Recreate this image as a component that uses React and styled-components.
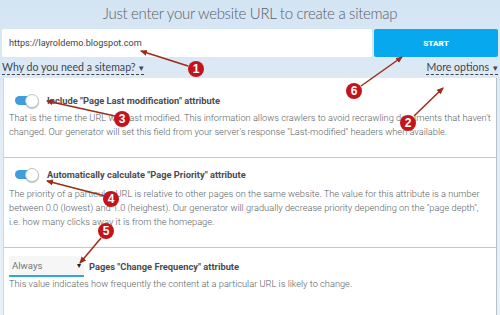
import React from "react";
import styled, { createGlobalStyle } from "styled-components";

const GlobalStyle = createGlobalStyle`
  html, body {
    margin: 0;
    padding: 0;
  }
  body {
    width: 500px;
    height: 315px;
    overflow: hidden;
    font-family: Roboto, "Liberation Sans", sans-serif;
  }
`;

const Page = styled.div`
  position: relative;
  width: 500px;
  height: 315px;
  overflow: hidden;
  display: flex;
  flex-direction: column;
  background: linear-gradient(180deg, #d3e4f3 0%, #dfebf6 30%, #e9f1f8 100%);
`;

const Title = styled.h1`
  margin: 0;
  height: 29px;
  padding-top: 1px;
  box-sizing: border-box;
  text-align: center;
  font-family: Lato, "Open Sans", sans-serif;
  font-weight: 300;
  font-size: 15px;
  letter-spacing: -0.3px;
  line-height: 24px;
  color: #5a5f66;
`;

const FormRow = styled.div`
  display: flex;
  gap: 2px;
  height: 28px;
  padding: 0 2px;
`;

const UrlInput = styled.div`
  flex: 1;
  background: #fff;
  display: flex;
  align-items: center;
  padding-left: 7px;
  font-size: 9.1px;
  color: #444;
  border-radius: 2px;
`;

const StartButton = styled.button`
  width: 124px;
  border: none;
  border-radius: 2px;
  background: #08a8ee;
  color: #fff;
  font-family: Roboto, sans-serif;
  font-weight: 900;
  font-size: 8px;
  letter-spacing: 0.1px;
  padding: 0;
`;

const LinksRow = styled.div`
  display: flex;
  justify-content: space-between;
  align-items: center;
  height: 21px;
  padding: 0 2px;
`;

const DropLink = styled.span`
  font-family: Lato, Roboto, sans-serif;
  font-size: 10.6px;
  color: #3f4650;
  border-bottom: 1px dashed #3f4650;
  line-height: 13px;
  &::after {
    content: "▾";
    font-size: 9px;
    margin-left: 4px;
  }
`;

const Panel = styled.div`
  flex: 1;
  margin: 0 3px;
  background: #fff;
  border-left: 1px solid #cfd6dd;
  border-right: 1px solid #b9c1c8;
`;

const Section = styled.div`
  padding: ${(p) => p.$top}px 6px ${(p) => p.$bottom}px 5px;
  border-bottom: ${(p) => (p.$last ? "none" : "1px solid #c8c8c8")};
`;

const OptionRow = styled.div`
  display: flex;
  align-items: center;
  gap: 9px;
  height: 14px;
  padding-left: 6px;
`;

const Toggle = styled.span`
  position: relative;
  width: 23px;
  height: 9px;
  border-radius: 5px;
  background: #3f9ede;
  flex-shrink: 0;
  &::after {
    content: "";
    position: absolute;
    right: -1px;
    top: -2px;
    width: 12px;
    height: 12px;
    border-radius: 50%;
    background: #fff;
    border: 0.5px solid #b8c4cc;
    box-shadow: 0 1px 1px rgba(0, 0, 0, 0.25);
  }
`;

const OptionTitle = styled.span`
  font-size: 9.3px;
  font-weight: 700;
  color: #474c52;
  white-space: nowrap;
`;

const Description = styled.div`
  margin-top: ${(p) => p.$gap}px;
  font-size: 9.25px;
  font-weight: 300;
  line-height: 14px;
  color: #595f65;
  white-space: nowrap;
`;

const Line = styled.span`
  display: block;
`;

const SelectRow = styled.div`
  display: flex;
  align-items: center;
  gap: 5px;
`;

const SelectBox = styled.div`
  width: 75px;
  height: 21px;
  box-sizing: border-box;
  background: #f6f6f6;
  border-bottom: 2px solid #2ea8e0;
  display: flex;
  align-items: center;
  justify-content: space-between;
  padding: 0 3px 0 3px;
  font-size: 9.6px;
  color: #777;
  &::after {
    content: "▾";
    font-size: 8px;
    color: #222;
  }
`;

const Overlay = styled.svg`
  position: absolute;
  left: 0;
  top: 0;
  pointer-events: none;
`;

const Badge = styled.span`
  position: absolute;
  left: ${(p) => p.$x - 8}px;
  top: ${(p) => p.$y - 8}px;
  width: 16px;
  height: 16px;
  border-radius: 50%;
  background: #c4131b;
  color: #fff;
  font-family: "Liberation Sans", Arial, sans-serif;
  font-weight: 700;
  font-size: 12px;
  line-height: 16px;
  text-align: center;
`;

const arrows = [
  { from: [188, 66], to: [141, 51] },
  { from: [361, 86], to: [402, 57] },
  { from: [414, 116], to: [443, 88] },
  { from: [115, 116], to: [47, 101] },
  { from: [105, 196], to: [47, 181] },
  { from: [101, 238], to: [80, 263] },
];

const badges = [
  { n: 1, x: 196, y: 69 },
  { n: 6, x: 354, y: 91 },
  { n: 2, x: 408, y: 123 },
  { n: 3, x: 122, y: 119 },
  { n: 4, x: 111, y: 199 },
  { n: 5, x: 106, y: 231 },
];

const Annotations = () => (
  <>
    <Overlay width="500" height="315" viewBox="0 0 500 315">
      <defs>
        <marker id="head" markerWidth="8" markerHeight="8" refX="6" refY="3" orient="auto" markerUnits="userSpaceOnUse">
          <path d="M0,0 L7,3 L0,6 Z" fill="#9c2b17" />
        </marker>
      </defs>
      {arrows.map((a, i) => (
        <line
          key={i}
          x1={a.from[0]}
          y1={a.from[1]}
          x2={a.to[0]}
          y2={a.to[1]}
          stroke="#9c2b17"
          strokeWidth="1.5"
          markerEnd="url(#head)"
        />
      ))}
    </Overlay>
    {badges.map((b) => (
      <Badge key={b.n} $x={b.x} $y={b.y}>
        {b.n}
      </Badge>
    ))}
  </>
);

export default function App() {
  return (
    <Page>
      <GlobalStyle />
      <Title>Just enter your website URL to create a sitemap</Title>
      <FormRow>
        <UrlInput>https://layroldemo.blogspot.com</UrlInput>
        <StartButton>START</StartButton>
      </FormRow>
      <LinksRow>
        <DropLink>Why do you need a sitemap?</DropLink>
        <DropLink>More options</DropLink>
      </LinksRow>
      <Panel>
        <Section $top={15} $bottom={18}>
          <OptionRow>
            <Toggle />
            <OptionTitle>Include "Page Last modification" attribute</OptionTitle>
          </OptionRow>
          <Description $gap={4}>
            <Line>That is the time the URL was last modified. This information allows crawlers to avoid recrawling documents that haven't</Line>
            <Line>changed. Our generator will set this field from your server's response "Last-modified" headers when available.</Line>
          </Description>
        </Section>
        <Section $top={9} $bottom={18}>
          <OptionRow>
            <Toggle />
            <OptionTitle>Automatically calculate "Page Priority" attribute</OptionTitle>
          </OptionRow>
          <Description $gap={6}>
            <Line>The priority of a particular URL is relative to other pages on the same website. The value for this attribute is a number</Line>
            <Line>between 0.0 (lowest) and 1.0 (heighest). Our generator will gradually decrease priority depending on the "page depth",</Line>
            <Line>i.e. how many clicks away it is from the homepage.</Line>
          </Description>
        </Section>
        <Section $top={8} $bottom={0} $last>
          <SelectRow>
            <SelectBox>Always</SelectBox>
            <OptionTitle>Pages "Change Frequency" attribute</OptionTitle>
          </SelectRow>
          <Description $gap={0}>
            <Line>This value indicates how frequently the content at a particular URL is likely to change.</Line>
          </Description>
        </Section>
      </Panel>
      <Annotations />
    </Page>
  );
}
